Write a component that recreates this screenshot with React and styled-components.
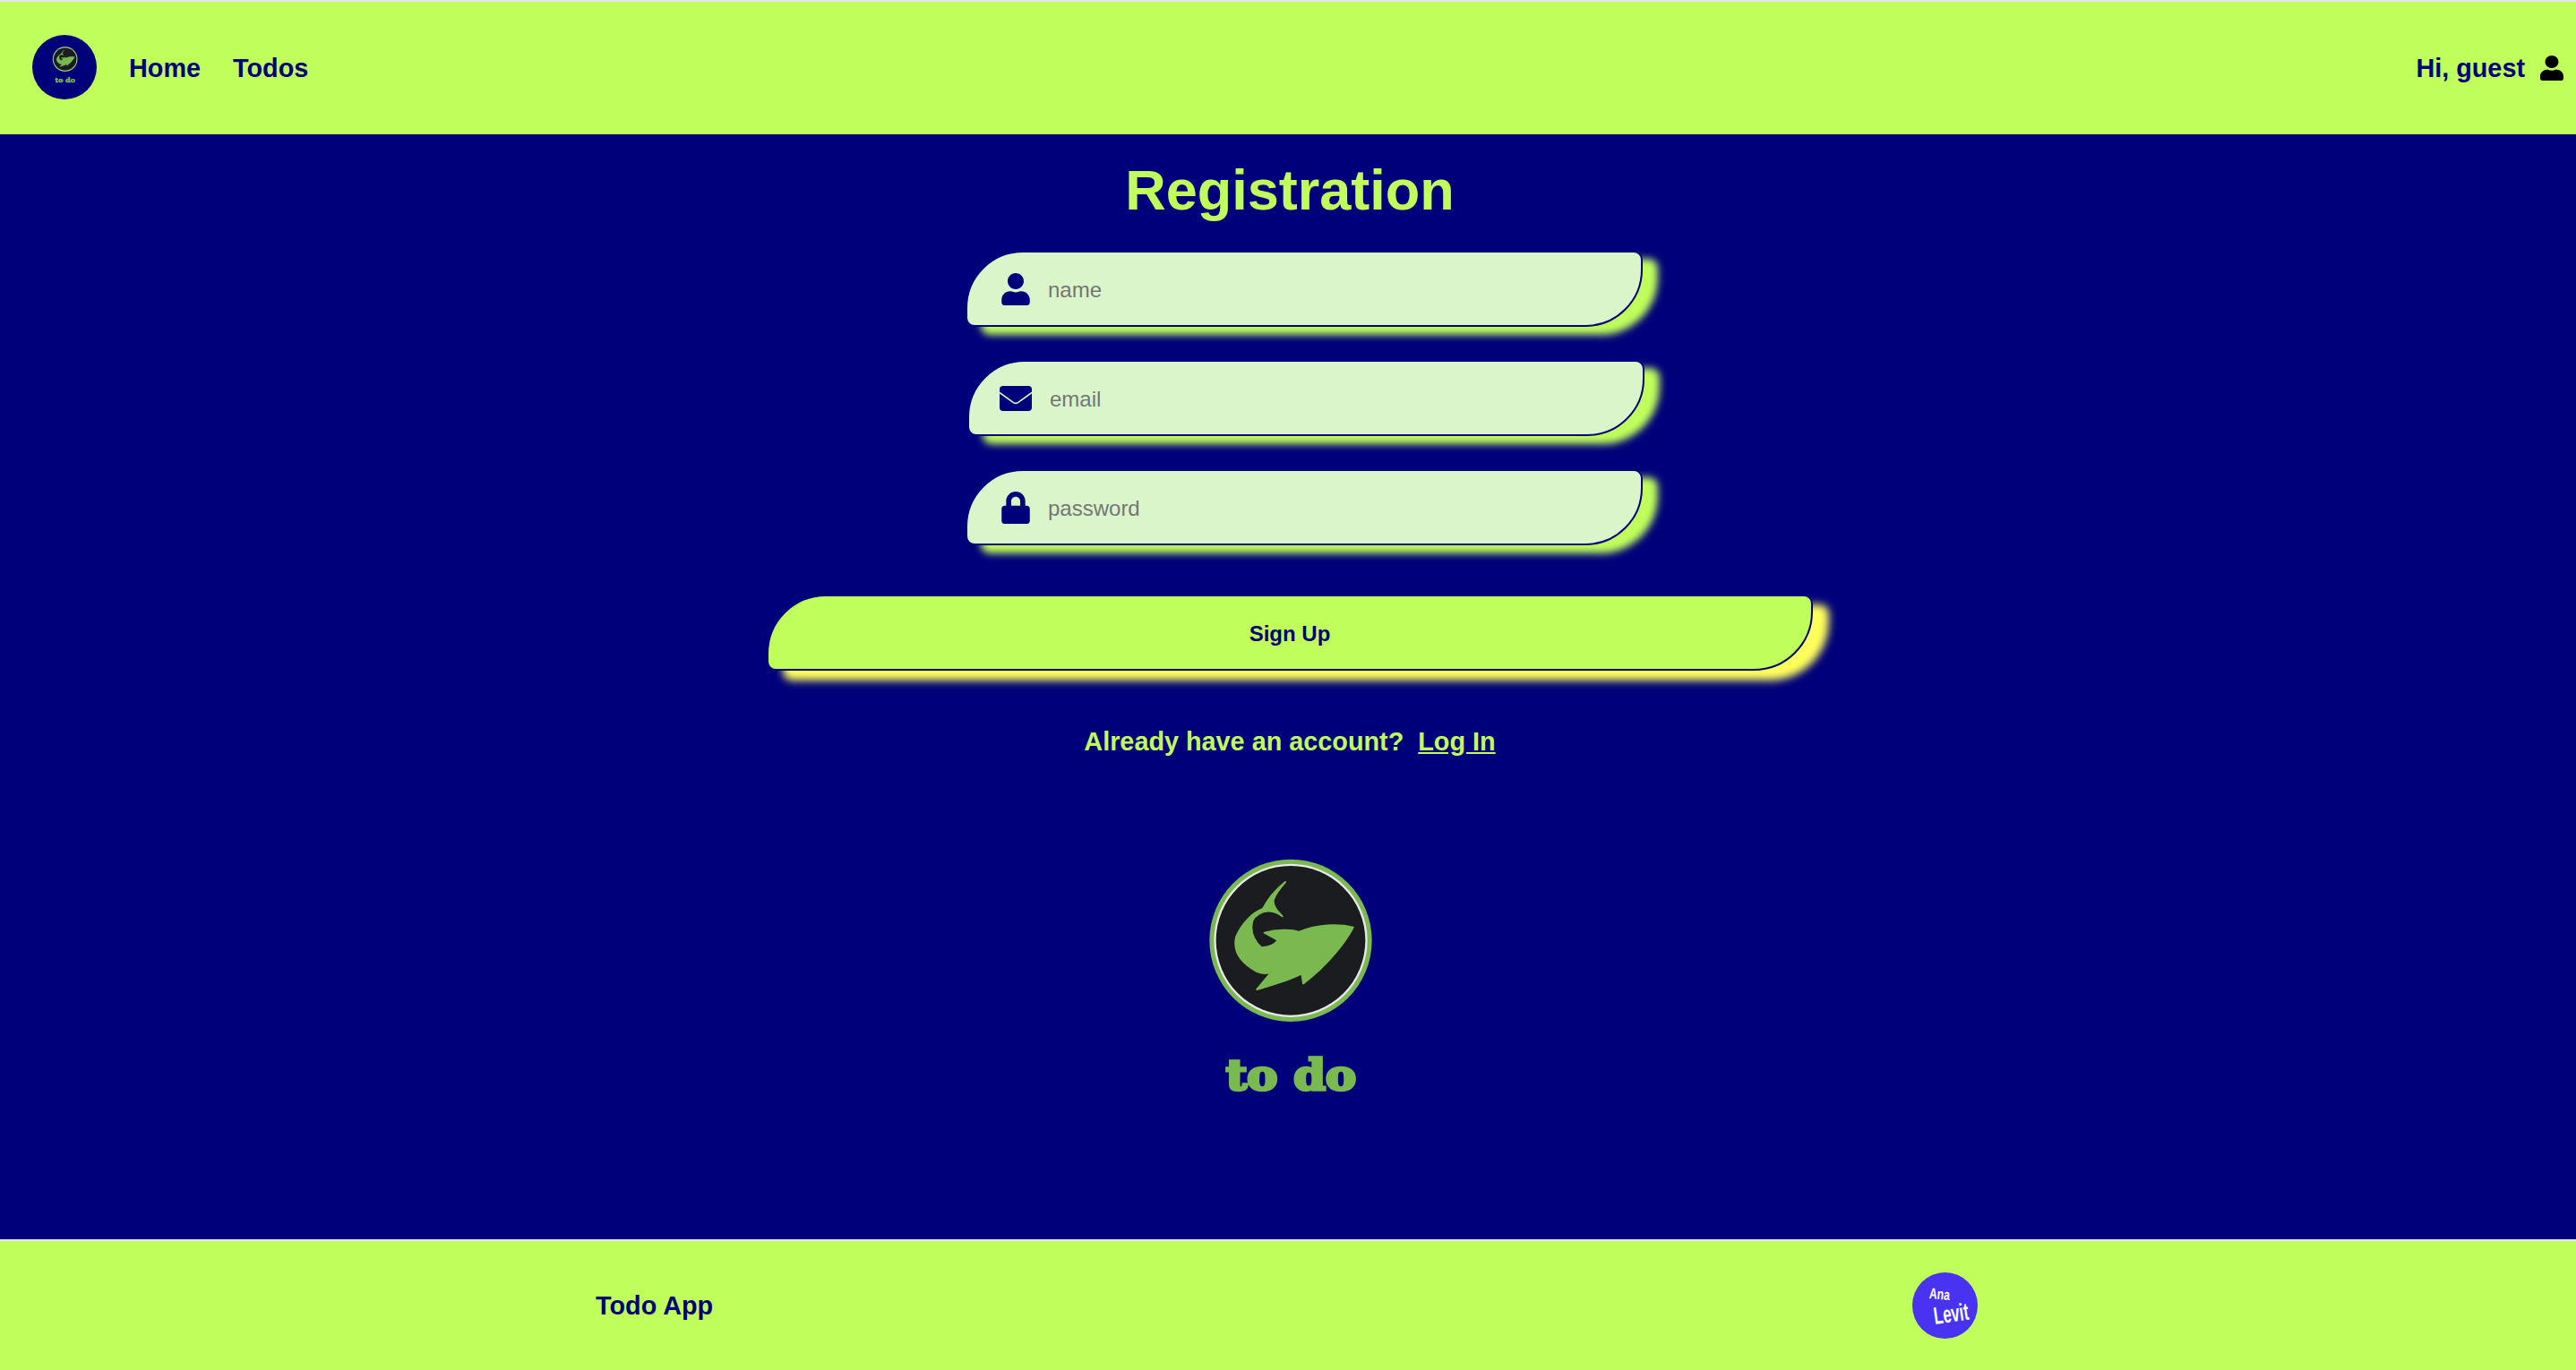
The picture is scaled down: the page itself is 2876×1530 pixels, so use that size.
import React from 'react'
import styled, { createGlobalStyle } from 'styled-components'
import { FaUser, FaLock } from 'react-icons/fa'

const lime = '#c0ff5b'
const navy = '#00007a'
const logoGreen = '#7ab950'

const GlobalStyle = createGlobalStyle`
  * {
    box-sizing: border-box;
  }
  body {
    margin: 0;
    font-family: "Liberation Sans", Arial, sans-serif;
    background: ${navy};
  }
`

const Page = styled.div`
  display: flex;
  flex-direction: column;
  height: 1530px;
  overflow: hidden;
`

const Header = styled.header`
  display: flex;
  align-items: center;
  flex: 0 0 150px;
  padding: 0 14px 0 36px;
  background: ${lime};
  border-top: 2px solid #e4e4e4;
`

const Avatar = styled.div`
  display: flex;
  align-items: center;
  justify-content: center;
  width: 72px;
  height: 72px;
  padding-bottom: 6px;
  margin: -2px 36px 0 0;
  border-radius: 50%;
  background: ${navy};
`

const NavLink = styled.a`
  margin-right: 36px;
  font-size: 28.8px;
  font-weight: 700;
  color: ${navy};
  text-decoration: none;
`

const Greeting = styled.div`
  display: flex;
  align-items: center;
  gap: 17px;
  margin-left: auto;
  font-size: 28.8px;
  font-weight: 700;
  color: ${navy};
`

const GuestIcon = styled.svg`
  width: 26px;
  height: 28px;
  fill: #000;
`

const Main = styled.main`
  display: flex;
  flex: 1;
  flex-direction: column;
  align-items: center;
  padding-left: 4px;
  background: ${navy};
`

const Title = styled.h1`
  margin: 25px 0 31px;
  font-size: 63px;
  line-height: 74px;
  font-weight: 700;
  color: ${lime};
`

const Form = styled.form`
  display: flex;
  flex-direction: column;
  align-items: center;
`

const Field = styled.div`
  position: relative;
  width: 759px;
  height: 85px;
  margin: 0 0 37px 35px;
`

const FieldIcon = styled.span`
  position: absolute;
  top: 50%;
  left: 38px;
  display: flex;
  font-size: 36px;
  color: ${navy};
  transform: translateY(-50%);
`

const TextInput = styled.input`
  display: block;
  width: 756px;
  height: 85px;
  margin-left: ${({ $nudge }) => $nudge || 0}px;
  padding: 2px 0 0 90px;
  font-family: inherit;
  font-size: 24px;
  background: #dbf5ca;
  border: 2px solid ${navy};
  border-radius: 64px 10px 64px 10px;
  box-shadow: 17px 9px 9px ${lime};
  outline: none;
  &::placeholder {
    color: #757575;
  }
`

const SubmitButton = styled.button`
  width: 1168px;
  height: 85px;
  margin-top: 18px;
  padding-top: 3px;
  font-family: inherit;
  font-size: 24px;
  font-weight: 700;
  color: ${navy};
  background: ${lime};
  border: 2px solid ${navy};
  border-radius: 66px 10px 66px 10px;
  box-shadow: 18px 11px 10px #ffff5c;
  cursor: pointer;
`

const SwitchText = styled.p`
  margin: 63px 0 95px;
  font-size: 28.8px;
  line-height: 33px;
  font-weight: 700;
  color: ${lime};
  white-space: pre;
`

const SwitchLink = styled.a`
  color: ${lime};
  text-decoration: underline;
`

const LogoSvg = styled.svg`
  display: block;
  flex: none;
  width: ${({ $width }) => $width}px;
  height: ${({ $width }) => $width * 1.25}px;
  filter: blur(${({ $blur }) => $blur}px);
`

const LogoWord = styled.text`
  font-family: "DejaVu Serif", serif;
  font-size: 138px;
  font-weight: 700;
  fill: ${logoGreen};
  stroke: ${logoGreen};
  stroke-width: 10px;
`

const Footer = styled.footer`
  display: flex;
  align-items: center;
  justify-content: space-between;
  flex: 0 0 146px;
  padding: 0 668px 0 665px;
  background: ${lime};
  border-top: 2px solid #e4e4e4;
`

const FooterTitle = styled.div`
  font-size: 28.8px;
  font-weight: 700;
  color: ${navy};
`

const Badge = styled.div`
  display: flex;
  flex-direction: column;
  align-items: flex-start;
  flex: none;
  width: 73px;
  height: 74px;
  padding: 14px 0 0 19px;
  border-radius: 50%;
  background: #4833f2;
  color: #fff;
  font-weight: 700;
`

const BadgeTop = styled.span`
  font-size: 17px;
  line-height: 20px;
  transform: rotate(5deg) scaleX(0.72);
  transform-origin: left center;
`

const BadgeBottom = styled.span`
  margin: 1px 0 0 5px;
  font-size: 27px;
  line-height: 28px;
  transform: rotate(-8deg) scaleX(0.62);
  transform-origin: left center;
`

const fishPath =
  'M345 135 C320 155 290 185 270 225 C235 238 198 275 180 320 C170 365 195 405 250 435 C270 443 285 443 300 435 L250 495 C300 480 355 465 400 442 L405 475 C445 445 490 400 515 370 C540 340 560 310 572 287 C525 275 450 276 390 303 C365 293 315 295 275 305 L320 330 C310 345 290 353 265 355 C240 332 226 300 235 265 C245 245 265 234 290 232 C310 234 325 242 335 250 C318 232 302 215 305 195 C312 175 330 152 345 135 Z'

const LogoMark = ({ width, blur }) => (
  <LogoSvg viewBox="0 0 720 900" $width={width} $blur={blur}>
    <circle cx="363" cy="331" r="272" fill={logoGreen} />
    <circle cx="363" cy="331" r="257" fill="#e8e8e8" />
    <circle cx="363" cy="331" r="250" fill="#1b1c20" />
    <path
      d={fishPath}
      fill={logoGreen}
      stroke={logoGreen}
      strokeWidth="6"
      strokeLinejoin="round"
    />
    <LogoWord
      x="364"
      y="830"
      textAnchor="middle"
      textLength="436"
      lengthAdjust="spacingAndGlyphs"
    >
      to do
    </LogoWord>
  </LogoSvg>
)

// the envelope in the picture is a solid card with a thin flap line
const MailIcon = () => (
  <svg width="36" height="28" viewBox="0 0 36 28">
    <rect width="36" height="28" rx="4" fill={navy} />
    <path
      d="M0 7.5 L15.5 18.6 Q18 20.2 20.5 18.6 L36 7.5"
      fill="none"
      stroke="#dbf5ca"
      strokeWidth="1.6"
    />
  </svg>
)

const App = () => (
  <Page>
    <GlobalStyle />
    <Header>
      <Avatar>
        <LogoMark width={37} blur={0.2} />
      </Avatar>
      <NavLink href="#home">Home</NavLink>
      <NavLink href="#todos">Todos</NavLink>
      <Greeting>
        Hi, guest
        <GuestIcon as={FaUser} preserveAspectRatio="none" />
      </Greeting>
    </Header>
    <Main>
      <Title>Registration</Title>
      <Form>
        <Field>
          <FieldIcon>
            <FaUser />
          </FieldIcon>
          <TextInput placeholder="name" />
        </Field>
        <Field>
          <FieldIcon>
            <MailIcon />
          </FieldIcon>
          <TextInput $nudge={2} placeholder="email" />
        </Field>
        <Field>
          <FieldIcon>
            <FaLock />
          </FieldIcon>
          <TextInput placeholder="password" />
        </Field>
        <SubmitButton type="button">Sign Up</SubmitButton>
      </Form>
      <SwitchText>
        {'Already have an account?  '}
        <SwitchLink href="#login">Log In</SwitchLink>
      </SwitchText>
      <LogoMark width={240} blur={0.6} />
    </Main>
    <Footer>
      <FooterTitle>Todo App</FooterTitle>
      <Badge>
        <BadgeTop>Ana</BadgeTop>
        <BadgeBottom>Levit</BadgeBottom>
      </Badge>
    </Footer>
  </Page>
)

export default App
